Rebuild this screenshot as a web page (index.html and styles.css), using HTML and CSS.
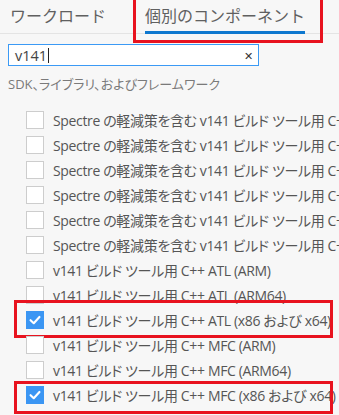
FILE: index.html
```html
<!DOCTYPE html>
<html lang="ja">
<head>
  <meta charset="UTF-8">
  <meta name="viewport" content="width=device-width, initial-scale=1.0">
  <title>個別のコンポーネント</title>
  <link rel="stylesheet" href="styles.css">
</head>
<body>
  <div id="installer">
    <div id="tabs">
      <div class="tab">ワークロード</div>
      <div class="tab active">個別のコンポーネント</div>
    </div>

    <div id="search">
      <span class="query">v141</span><span class="caret"></span>
      <span class="clear">✕</span>
    </div>

    <div id="group-title">SDK、ライブラリ、およびフレームワーク</div>

    <div id="components">
      <div class="item"><span class="box"></span>Spectre の軽減策を含む v141 ビルド ツール用 C++ ATL (ARM)</div>
      <div class="item"><span class="box"></span>Spectre の軽減策を含む v141 ビルド ツール用 C++ ATL (ARM64)</div>
      <div class="item"><span class="box"></span>Spectre の軽減策を含む v141 ビルド ツール用 C++ ATL (x86 および x64)</div>
      <div class="item"><span class="box"></span>Spectre の軽減策を含む v141 ビルド ツール用 C++ MFC (ARM)</div>
      <div class="item"><span class="box"></span>Spectre の軽減策を含む v141 ビルド ツール用 C++ MFC (ARM64)</div>
      <div class="item"><span class="box"></span>Spectre の軽減策を含む v141 ビルド ツール用 C++ MFC (x86 および x64)</div>
      <div class="item"><span class="box"></span>v141 ビルド ツール用 C++ ATL (ARM)</div>
      <div class="item"><span class="box"></span>v141 ビルド ツール用 C++ ATL (ARM64)</div>
      <div class="item marked first-mark"><span class="box checked"><svg viewBox="0 0 18 18" width="18" height="18"><path d="M4 9.2 L7.6 12.6 L14 5.6" fill="none" stroke="#fff" stroke-width="2.4" stroke-linecap="round" stroke-linejoin="round"/></svg></span>v141 ビルド ツール用 C++ ATL (x86 および x64)</div>
      <div class="item"><span class="box"></span>v141 ビルド ツール用 C++ MFC (ARM)</div>
      <div class="item"><span class="box"></span>v141 ビルド ツール用 C++ MFC (ARM64)</div>
      <div class="item marked last-mark"><span class="box checked"><svg viewBox="0 0 18 18" width="18" height="18"><path d="M4 9.2 L7.6 12.6 L14 5.6" fill="none" stroke="#fff" stroke-width="2.4" stroke-linecap="round" stroke-linejoin="round"/></svg></span>v141 ビルド ツール用 C++ MFC (x86 および x64)</div>
    </div>
  </div>
</body>
</html>
```

FILE: styles.css
```css
html, body {
  margin: 0;
  height: 100%;
  overflow: hidden;
  background: #f7f7f7;
}

#installer {
  font-family: "Open Sans", "Noto Sans CJK JP", sans-serif;
  font-feature-settings: "palt";
  color: #555;
  white-space: nowrap;
}

#tabs {
  display: flex;
  height: 33px;
  padding-left: 10px;
  border-bottom: 1px solid #e4e4e4;
  font-feature-settings: normal;
}

#tabs .tab {
  font-size: 16px;
  line-height: 20px;
  padding-top: 6px;
  color: #606060;
  width: 135px;
}

#tabs .tab.active {
  width: auto;
  border-bottom: 3px solid #0e78cf;
  height: 25px;
  position: relative;
}

/* red annotation around the active tab */
#tabs .tab.active::after {
  content: "";
  position: absolute;
  left: -12px;
  right: -18px;
  top: -3px;
  bottom: -12px;
  border: 3px solid #e8131f;
}

#search {
  margin: 10px 0 0 8px;
  width: 239px;
  height: 20px;
  padding: 0 4px 0 6px;
  background: #fff;
  border: 1px solid #3b9af5;
  display: flex;
  align-items: center;
  font-size: 14.5px;
  color: #444;
}

#search .caret {
  width: 1px;
  height: 15px;
  background: #222;
  margin-left: 1px;
}

#search .clear {
  margin-left: auto;
  font-size: 11px;
  color: #333;
  padding-right: 1px;
}

#group-title {
  margin: 8px 0 0 8px;
  font-size: 13px;
  line-height: 20px;
  color: #7a7a7a;
}

#components {
  margin-top: 13px;
  padding-left: 26px;
}

#components .item {
  display: flex;
  align-items: center;
  height: 25px;
  font-size: 14px;
  letter-spacing: -0.35px;
  color: #555;
  position: relative;
}

#components .box {
  flex: none;
  width: 16px;
  height: 16px;
  margin-right: 9px;
  background: #fff;
  border: 1px solid #cdcdcd;
  display: flex;
  align-items: center;
  justify-content: center;
}

#components .box.checked {
  background: #3b96f3;
  border-color: #3b96f3;
}

/* red annotations around the checked rows */
#components .item.marked::after {
  content: "";
  position: absolute;
  left: -12px;
  width: 313px;
  border: 3px solid #e8131f;
}

#components .item.first-mark::after {
  top: -7px;
  height: 32px;
}

#components .item.last-mark::after {
  top: -1px;
  height: 27px;
}
```
